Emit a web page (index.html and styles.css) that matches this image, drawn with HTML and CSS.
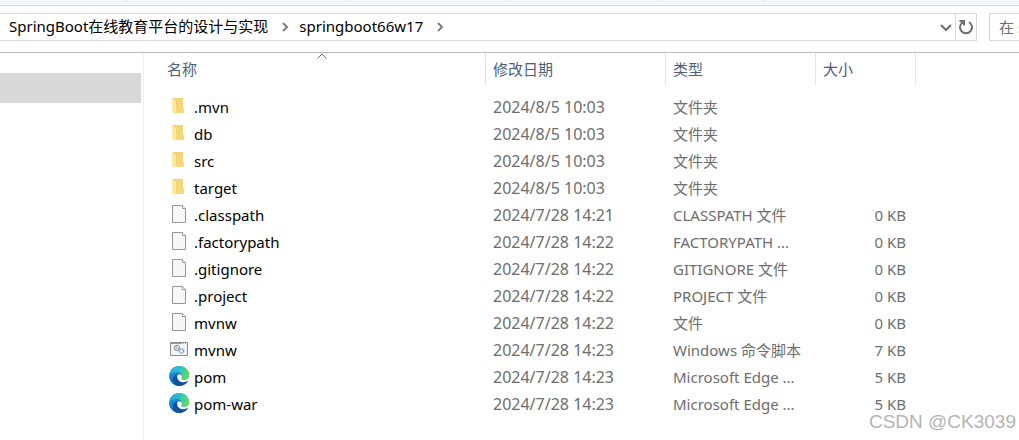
FILE: index.html
```
<!DOCTYPE html>
<html lang="zh-CN">
<head>
  <meta charset="UTF-8">
  <meta name="viewport" content="width=device-width, initial-scale=1.0">
  <title>springboot66w17</title>
  <link rel="stylesheet" href="styles.css">
</head>
<body>
  <svg class="defs" aria-hidden="true">
    <defs>
      <linearGradient id="gFolder" x1="0" y1="0" x2="1" y2="1">
        <stop offset="0" stop-color="#f0cf72"/>
        <stop offset="1" stop-color="#fbdc7d"/>
      </linearGradient>
      <linearGradient id="gEdgeTop" x1="0" y1="0.4" x2="1" y2="0.6">
        <stop offset="0" stop-color="#27a9dd"/>
        <stop offset="0.5" stop-color="#2fc3c4"/>
        <stop offset="1" stop-color="#67e04b"/>
      </linearGradient>
      <linearGradient id="gEdgeLeft" x1="0" y1="0" x2="0.5" y2="1">
        <stop offset="0" stop-color="#1f9fe4"/>
        <stop offset="1" stop-color="#0f6cc4"/>
      </linearGradient>
    </defs>
    <symbol id="folder" viewBox="0 0 20 20">
      <path d="M4 2h10v9l1 1v5H5z" fill="url(#gFolder)"/>
      <path d="M3 2l4 3v10l-1 3-3-2z" fill="#fde8a4"/>
    </symbol>
    <symbol id="file" viewBox="0 0 20 20">
      <path d="M3.500 1.500h10l3 3v14h-13z" fill="#f6f7f8" stroke="#979797"/>
      <path d="M13.500 1.500v3h3" fill="#fff" stroke="#979797"/>
    </symbol>
    <symbol id="script" viewBox="0 0 20 20">
      <path d="M1.500 3.500h17v13h-17z" fill="#f4f5f6" stroke="#8a8d90"/>
      <path d="M2 4h16v1H2z" fill="#9a9da0"/>
      <path d="M13 4h1v1h-1zM15 4h1v1h-1zM17 4h1v1h-1z" fill="#fff"/>
      <circle cx="8" cy="9" r="2.500" fill="#fff" stroke="#777" stroke-width="1.500" stroke-dasharray="1.200 .5"/>
      <circle cx="8" cy="9" r=".8" fill="#777"/>
      <circle cx="12.500" cy="12" r="2.200" fill="#e3f1fb" stroke="#6da5cf" stroke-width="1.300" stroke-dasharray="1.200 .4"/>
    </symbol>
    <symbol id="edge" viewBox="0 0 20 20">
      <path d="M.3 8.500C1.200 3.500 5.200 0 10 0c5.800 0 10 4.200 10 9 0 3.300-2.500 5-5 5l4 .8C17.500 18 14 20 10 20 4.500 20 0 15.500 0 10z" fill="url(#gEdgeLeft)"/>
      <path d="M.3 8.500C1.200 3.500 5.200 0 10 0c5.800 0 10 4.200 10 9 0 3.300-2.500 5-5 5-1.800 0-3-.6-2.600-1.500.3-.5.800-1 .8-2 0-2.500-2.300-4.500-5.400-4.500C4.500 6 1.500 7 .3 8.500z" fill="url(#gEdgeTop)"/>
      <path d="M8.300 8.200C5.500 9 3.500 11 3.600 14c.2 3.300 3.400 5.900 6.900 6 3.500 0 6.700-2 8.400-5.200-2 1.100-4.200 1.500-6.400 1.200-4-.5-5.500-4.500-4.200-7.800z" fill="#0f509f"/>
      <path d="M8.300 9.500c.8-1.300 3.500-1.500 4.700.2.300 1.200-.2 2-.6 2.600-.5.900.8 1.700 2.600 1.700 1.500 0 3-.5 4-1.500l1 .2-1 2.100c-1.500 1-3.500 1.500-5.200 1.400-3.300 0-6-3.200-5.500-6.700z" fill="#fff"/>
    </symbol>
  </svg>

  <div class="ribbon">
    <span></span><span></span><span></span><span></span><span></span>
  </div>

  <div class="toolbar">
    <nav class="address">
      <button class="crumb">SpringBoot在线教育平台的设计与实现</button>
      <svg class="sep" viewBox="0 0 6 10"><path d="M1 1l4 4-4 4"/></svg>
      <button class="crumb">springboot66w17</button>
      <svg class="sep" viewBox="0 0 6 10"><path d="M1 1l4 4-4 4"/></svg>
      <button class="tool history" aria-label="历史记录">
        <svg width="12" height="8" viewBox="0 0 12 8"><path d="M1 1l5 5 5-5"/></svg>
      </button>
      <button class="tool refresh" aria-label="刷新">
        <svg width="16" height="16" viewBox="0 0 16 16"><path d="M11 3a6 6 0 1 1-6 0M1.500 2h4.500v4.500"/></svg>
      </button>
    </nav>
    <input class="search" type="text" aria-label="搜索" placeholder="在 springboot66w17 中搜索">
  </div>

  <div class="content">
    <aside class="sidebar"><div class="selected"></div></aside>
    <main class="files">
      <table>
        <colgroup>
          <col class="c-name"><col class="c-date"><col class="c-type"><col class="c-size"><col>
        </colgroup>
        <thead>
          <tr>
            <th>名称<svg class="sort" viewBox="0 0 10 6"><path d="M.5 5.500L5 1l4.500 4.500"/></svg></th>
            <th>修改日期</th>
            <th>类型</th>
            <th>大小</th>
            <td></td>
          </tr>
        </thead>
        <tbody>
          <tr><td><div class="name"><svg><use href="#folder"/></svg>.mvn</div></td><td>2024/8/5 10:03</td><td>文件夹</td><td></td><td></td></tr>
          <tr><td><div class="name"><svg><use href="#folder"/></svg>db</div></td><td>2024/8/5 10:03</td><td>文件夹</td><td></td><td></td></tr>
          <tr><td><div class="name"><svg><use href="#folder"/></svg>src</div></td><td>2024/8/5 10:03</td><td>文件夹</td><td></td><td></td></tr>
          <tr><td><div class="name"><svg><use href="#folder"/></svg>target</div></td><td>2024/8/5 10:03</td><td>文件夹</td><td></td><td></td></tr>
          <tr><td><div class="name"><svg><use href="#file"/></svg>.classpath</div></td><td>2024/7/28 14:21</td><td>CLASSPATH 文件</td><td>0 KB</td><td></td></tr>
          <tr><td><div class="name"><svg><use href="#file"/></svg>.factorypath</div></td><td>2024/7/28 14:22</td><td>FACTORYPATH ...</td><td>0 KB</td><td></td></tr>
          <tr><td><div class="name"><svg><use href="#file"/></svg>.gitignore</div></td><td>2024/7/28 14:22</td><td>GITIGNORE 文件</td><td>0 KB</td><td></td></tr>
          <tr><td><div class="name"><svg><use href="#file"/></svg>.project</div></td><td>2024/7/28 14:22</td><td>PROJECT 文件</td><td>0 KB</td><td></td></tr>
          <tr><td><div class="name"><svg><use href="#file"/></svg>mvnw</div></td><td>2024/7/28 14:22</td><td>文件</td><td>0 KB</td><td></td></tr>
          <tr><td><div class="name"><svg><use href="#script"/></svg>mvnw</div></td><td>2024/7/28 14:23</td><td>Windows 命令脚本</td><td>7 KB</td><td></td></tr>
          <tr><td><div class="name"><svg><use href="#edge"/></svg>pom</div></td><td>2024/7/28 14:23</td><td>Microsoft Edge ...</td><td>5 KB</td><td></td></tr>
          <tr><td><div class="name"><svg><use href="#edge"/></svg>pom-war</div></td><td>2024/7/28 14:23</td><td>Microsoft Edge ...</td><td>5 KB</td><td></td></tr>
        </tbody>
      </table>
    </main>
  </div>

  <div class="watermark">CSDN @CK3039</div>
</body>
</html>
```

FILE: styles.css
```
* { box-sizing: border-box; }
body { margin: 0; min-height: 100vh; display: flex; flex-direction: column; position: relative; overflow: hidden; background: #fff; color: #000; font: 15px/27px "Noto Sans", "Noto Sans CJK SC", sans-serif; }
button, input { font: inherit; color: inherit; border: none; background: none; padding: 0; margin: 0; }
.defs { position: absolute; width: 0; height: 0; }

.ribbon { display: grid; grid-template-columns: 127px 220px 163px 152px 102px; height: 6px; background: #f5f6f7; border-bottom: 1px solid #dadbdc; }
.ribbon span { height: 2px; border-right: 1px solid #e2e3e4; }

.toolbar { display: flex; gap: 12px; padding: 7px 0 11px; border-bottom: 1px solid #b9b9b9; }
.address { flex: 1; display: flex; align-items: center; height: 28px; border: 1px solid #d9d9d9; border-left: none; padding-left: 9px; }
.crumb { padding-bottom: 2px; }
.sep { width: 6px; height: 10px; margin: 0 11px 0 14px; fill: none; stroke: #808080; stroke-width: 2; }
.tool { display: flex; align-items: center; justify-content: center; height: 26px; }
.tool svg { fill: none; stroke: #6e6e6e; stroke-width: 2; }
.history { width: 18px; margin-left: auto; padding-top: 2px; }
.refresh { width: 21px; border-left: 1px solid #d9d9d9; }
.search { width: 30px; height: 28px; border: 1px solid #d9d9d9; border-right: none; padding-left: 9px; }
.search::placeholder { color: #6d6d6d; opacity: 1; }

.content { flex: 1; display: flex; }
.sidebar { width: 144px; padding: 20px 2px 0 0; border-right: 1px solid #f2f2f2; }
.selected { height: 30px; background: #d9d9d9; }
.files { flex: 1; padding-left: 15px; }

table { width: 100%; table-layout: fixed; border-collapse: separate; border-spacing: 0; }
.c-name { width: 327px; }
.c-date { width: 180px; }
.c-type { width: 150px; }
.c-size { width: 100px; }
th { position: relative; height: 32px; padding: 0 7px; text-align: left; font-weight: normal; color: #4c607a; border-right: 1px solid #e4e4e4; }
th:first-child { padding-left: 8px; }
tbody::before { content: ""; display: block; height: 9px; }
tbody td { height: 27px; padding: 0 7px 2px; color: #6d6d6d; line-height: 20px; white-space: nowrap; }
tbody td:first-child { color: #000; }
tbody td:nth-child(2) { font-size: 16px; }
tbody td:nth-child(4) { text-align: right; padding-right: 10px; }
.sort { position: absolute; top: 0; left: 158px; width: 10px; height: 6px; fill: none; stroke: #6d6d6d; }
.name { display: flex; align-items: center; gap: 5px; padding-left: 3px; }
.name svg { width: 20px; height: 20px; margin-bottom: 1px; }

.watermark { position: absolute; right: 3px; bottom: 8px; font: 19px/20px "Liberation Sans", Arial, sans-serif; color: #b4b4b4; text-shadow: 0 0 2px #fff; }
```
